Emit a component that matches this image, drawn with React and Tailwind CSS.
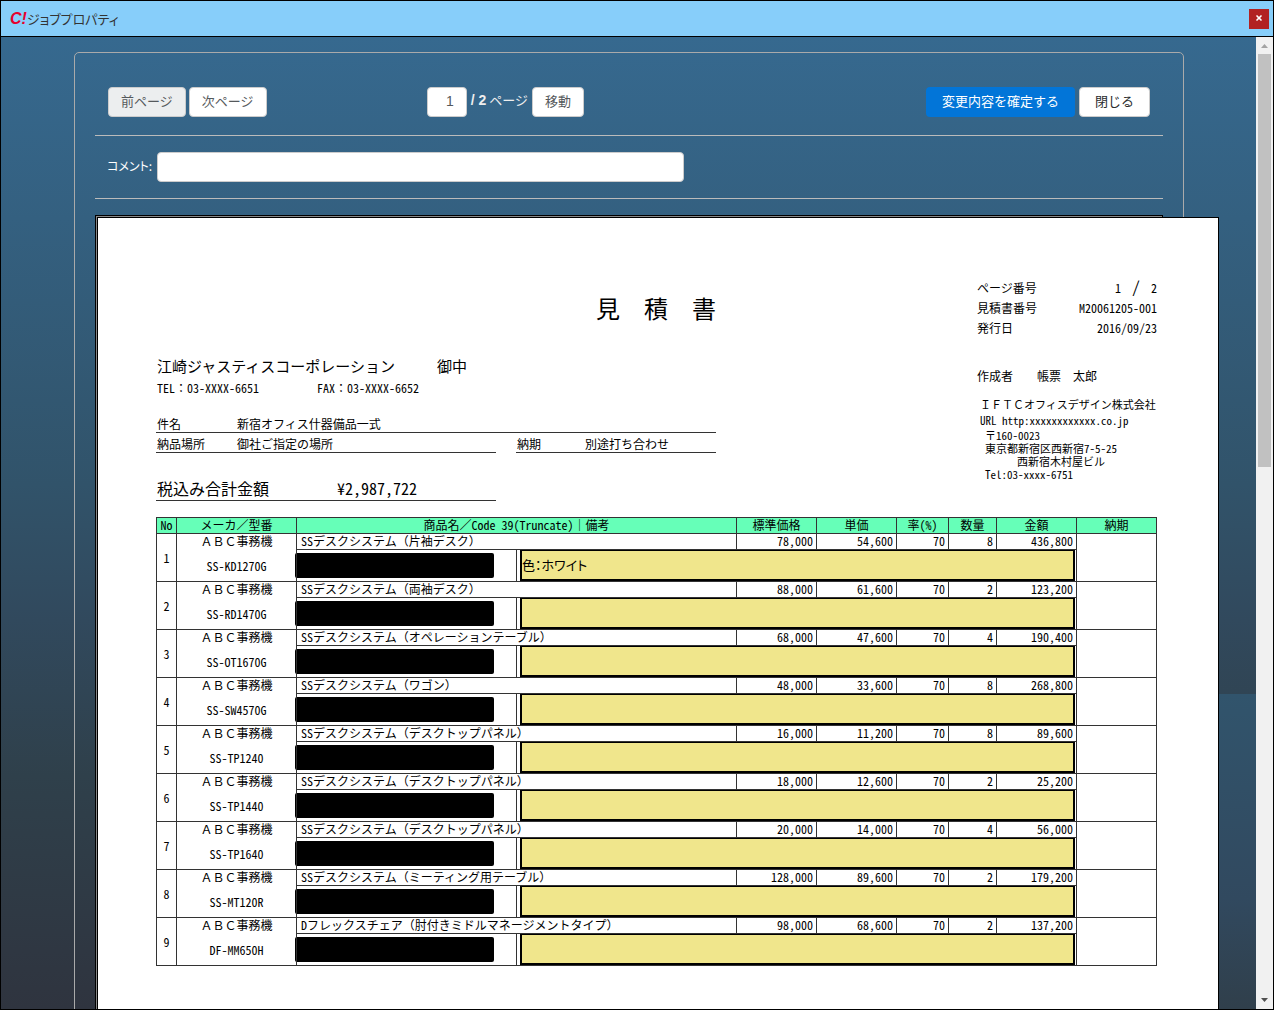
import { useState } from "react";
import { X } from "lucide-react";

const items = [
  { code: "SS-KD1270G", name: "SSデスクシステム（片袖デスク）", list: "78,000", unit: "54,600", rate: 70, qty: 8, total: "436,800", note: "色：ホワイト" },
  { code: "SS-RD1470G", name: "SSデスクシステム（両袖デスク）", list: "88,000", unit: "61,600", rate: 70, qty: 2, total: "123,200", note: "" },
  { code: "SS-OT1670G", name: "SSデスクシステム（オペレーションテーブル）", list: "68,000", unit: "47,600", rate: 70, qty: 4, total: "190,400", note: "" },
  { code: "SS-SW4570G", name: "SSデスクシステム（ワゴン）", list: "48,000", unit: "33,600", rate: 70, qty: 8, total: "268,800", note: "" },
  { code: "SS-TP1240", name: "SSデスクシステム（デスクトップパネル）", list: "16,000", unit: "11,200", rate: 70, qty: 8, total: "89,600", note: "" },
  { code: "SS-TP1440", name: "SSデスクシステム（デスクトップパネル）", list: "18,000", unit: "12,600", rate: 70, qty: 2, total: "25,200", note: "" },
  { code: "SS-TP1640", name: "SSデスクシステム（デスクトップパネル）", list: "20,000", unit: "14,000", rate: 70, qty: 4, total: "56,000", note: "" },
  { code: "SS-MT120R", name: "SSデスクシステム（ミーティング用テーブル）", list: "128,000", unit: "89,600", rate: 70, qty: 2, total: "179,200", note: "" },
  { code: "DF-MM650H", name: "Dフレックスチェア（肘付きミドルマネージメントタイプ）", list: "98,000", unit: "68,600", rate: 70, qty: 2, total: "137,200", note: "" },
];

const btn = "h-[30px] rounded border border-[#ccc] bg-white px-3 pb-1 text-[13px] leading-none whitespace-nowrap disabled:bg-[#eceeef]";
const cell = "border border-[#333] p-0";
const head = "border border-[#333] p-0 align-top font-normal";
const num = "border border-[#333] p-0 pr-[3px] text-right align-top";

// the sheet sets latin text half width, full width characters keep their own width
function Mixed({ children }) {
  return children.split(/([！-～　]+)/).map((part, i) =>
    i % 2 ? <span key={i} className="[font-feature-settings:normal]">{part}</span> : part
  );
}

function TitleBar() {
  return (
    <header className="flex h-9 shrink-0 items-center border-b border-black bg-[#87cefa] pr-1 pl-[9px]">
      <span className="font-['Liberation_Sans',sans-serif] text-[16px] leading-5 font-bold text-[#e6002d] italic">C!</span>
      <h1 className="text-[13px] leading-5 text-[#333] [font-feature-settings:'palt']">ジョブプロパティ</h1>
      <button aria-label="閉じる" className="ml-auto flex h-5 w-5 justify-center bg-[#b22222] pt-[5px] text-white">
        <X size={8} strokeWidth={5} />
      </button>
    </header>
  );
}

function Toolbar() {
  const [page, setPage] = useState("1");
  return (
    <div className="flex items-center border-b border-[#bbb] px-px pb-[18px] text-[#55595c]">
      <div className="flex w-[30%] gap-[3px] pl-3">
        <button disabled className={btn}>前ページ</button>
        <button className={btn}>次ページ</button>
      </div>
      <div className="flex items-center gap-1 pl-[11px]">
        <input aria-label="ページ" value={page} onChange={(e) => setPage(e.target.value)} className="h-[30px] w-10 rounded border border-[#ccc] bg-white pr-3 pb-[2px] text-right font-['Liberation_Sans',sans-serif] text-[14px]" />
        <span className="pb-1 text-[13px] leading-5 whitespace-nowrap text-[#eee]">
          <b className="font-['Liberation_Sans',sans-serif] text-[14px]">/ 2</b> ページ
        </span>
        <button className={btn}>移動</button>
      </div>
      <div className="ml-auto flex gap-1 pr-3">
        <button className="h-[30px] rounded bg-[#0275d8] px-4 pb-1 text-[13px] leading-none whitespace-nowrap text-white">変更内容を確定する</button>
        <button className="h-[30px] rounded border border-[#ccc] bg-white px-[15px] pb-1 text-[13px] leading-none whitespace-nowrap text-[#292b2c]">閉じる</button>
      </div>
    </div>
  );
}

function Comment() {
  const [comment, setComment] = useState("");
  return (
    <div className="flex items-center gap-1 border-b border-[#bbb] px-3 py-4">
      <label htmlFor="comment" className="w-[46px] pb-[2px] text-[12px] leading-5 whitespace-nowrap text-white [font-feature-settings:'palt']">コメント:</label>
      <input id="comment" value={comment} onChange={(e) => setComment(e.target.value)} className="h-[30px] w-[527px] rounded border border-[#ccc] bg-white px-3 text-[13px]" />
    </div>
  );
}

function Summary() {
  return (
    <div className="flex justify-between text-[12px]">
      <div className="w-[560px] pt-[78px]">
        <h2 className="text-right text-[24px] leading-6"><Mixed>見　積　書</Mixed></h2>
        <p className="mt-9 flex gap-[42px] pl-px text-[15px] leading-5">
          <span>江崎ジャスティスコーポレーション</span>
          <span>御中</span>
        </p>
        <p className="mt-[2px] flex pl-px leading-5">
          <span className="w-40"><Mixed>TEL：03-XXXX-6651</Mixed></span>
          <span><Mixed>FAX：03-XXXX-6652</Mixed></span>
        </p>
        <div className="mt-[15px] flex h-5 items-end border-b border-[#333] pl-px leading-4">
          <span className="w-20">件名</span>
          <span>新宿オフィス什器備品一式</span>
        </div>
        <div className="flex gap-5 leading-4">
          <div className="flex h-5 w-[340px] items-end border-b border-[#333] pl-px">
            <span className="w-20">納品場所</span>
            <span>御社ご指定の場所</span>
          </div>
          <div className="flex h-5 grow items-end border-b border-[#333] pl-px">
            <span className="w-[68px]">納期</span>
            <span>別途打ち合わせ</span>
          </div>
        </div>
        <div className="mt-[27px] flex w-[340px] border-b border-[#333] pb-1 pl-px text-[16px] leading-4">
          <span className="w-[180px]">税込み合計金額</span>
          <span>¥2,987,722</span>
        </div>
      </div>
      <div className="w-[180px] pt-[60px]">
        <dl className="grid grid-cols-2 leading-5">
          <dt>ページ番号</dt>
          <dd className="flex items-start justify-end gap-[11px]">
            <span>1</span>
            <span className="text-[16px] leading-4">/</span>
            <span>2</span>
          </dd>
          <dt>見積書番号</dt>
          <dd className="text-right">M20061205-001</dd>
          <dt>発行日</dt>
          <dd className="text-right">2016/09/23</dd>
        </dl>
        <p className="mt-7 leading-5"><Mixed>作成者　　帳票　太郎</Mixed></p>
        <p className="mt-[10px] pl-[3px] text-[11px] leading-4 whitespace-nowrap"><Mixed>ＩＦＴＣオフィスデザイン株式会社</Mixed></p>
        <p className="pl-[3px] text-[11px] leading-4">URL http:xxxxxxxxxxxx.co.jp</p>
        <div className="pt-px pl-2 text-[11px] leading-[13px] whitespace-nowrap">
          <p>〒160-0023</p>
          <p>東京都新宿区西新宿7-5-25</p>
          <p className="pl-8">西新宿木村屋ビル</p>
          <p>Tel:03-xxxx-6751</p>
        </div>
      </div>
    </div>
  );
}

function Items() {
  return (
    <table className="mt-4 w-[1001px] table-fixed border-collapse text-[12px] leading-[13px]">
      <colgroup>
        <col className="w-5" />
        <col className="w-[120px]" />
        <col className="w-[220px]" />
        <col className="w-[220px]" />
        <col className="w-20" />
        <col className="w-20" />
        <col className="w-[52px]" />
        <col className="w-12" />
        <col className="w-20" />
        <col className="w-20" />
      </colgroup>
      <thead>
        <tr className="h-4 bg-[#66ffb8]">
          <th className={head}>No</th>
          <th className={head}><Mixed>メーカ／型番</Mixed></th>
          <th colSpan={2} className={head}><Mixed>商品名／Code 39(Truncate)｜備考</Mixed></th>
          <th className={head}>標準価格</th>
          <th className={head}>単価</th>
          <th className={head}>率(%)</th>
          <th className={head}>数量</th>
          <th className={head}>金額</th>
          <th className={head}>納期</th>
        </tr>
      </thead>
      {items.map((item, i) => (
        <tbody key={item.code}>
          <tr className="h-4">
            <td rowSpan={2} className={`${cell} text-center`}>{i + 1}</td>
            <td rowSpan={2} className={`${cell} text-center align-top`}>
              <Mixed>ＡＢＣ事務機</Mixed>
              <p className="pt-3">{item.code}</p>
            </td>
            <td colSpan={2} className={`${cell} pl-1 align-top whitespace-nowrap`}><Mixed>{item.name}</Mixed></td>
            <td className={num}>{item.list}</td>
            <td className={num}>{item.unit}</td>
            <td className={num}>{item.rate}</td>
            <td className={num}>{item.qty}</td>
            <td className={num}>{item.total}</td>
            <td rowSpan={2} className={cell}></td>
          </tr>
          <tr className="h-8">
            <td className={`${cell} align-top`}>
              <div className="mt-[3px] -ml-[2px] h-[25px] w-[199px] rounded-[2px] bg-black"></div>
            </td>
            <td colSpan={6} className={`${cell} align-top`}>
              <input aria-label={`備考 ${i + 1}`} defaultValue={item.note} className="-mt-px -mb-px ml-[3px] block h-8 w-[555px] border-2 border-black bg-[#f0e68c] pb-[2px] text-[13px] text-black [font-feature-settings:'palt']" />
            </td>
          </tr>
        </tbody>
      ))}
    </table>
  );
}

function ScrollBar() {
  return (
    <div className="flex w-[17px] shrink-0 flex-col items-center bg-[#f1f1f1]">
      <svg viewBox="0 0 17 17" className="h-[17px] w-[17px]"><path d="M5 11h7L8.500 7z" fill="#a3a3a3" /></svg>
      <div className="h-[413px] w-[13px] bg-[#c1c1c1]"></div>
      <svg viewBox="0 0 17 17" className="mt-auto h-[17px] w-[17px]"><path d="M5 6h7L8.500 10z" fill="#505050" /></svg>
    </div>
  );
}

export default function App() {
  return (
    <div className="flex h-screen flex-col overflow-hidden border border-black font-['Noto_Sans_CJK_JP',sans-serif]">
      <TitleBar />
      <div className="flex min-h-0 grow">
        <main className="min-w-0 grow overflow-hidden pt-[15px] pr-[72px] pl-[73px] [background:linear-gradient(#31546c,#31495f_65%,#303f4b)_right_bottom/60px_315px_no-repeat,linear-gradient(#36698f,#31536a_46%,#31495d_60%,#2f404b_76%,#2f343f)]">
          <div className="rounded-[5px] border border-[#aaa] px-5 pt-[34px] pb-5">
            <Toolbar />
            <Comment />
            <div className="mt-4 border border-black">
              <div className="border border-[#888]">
                <div className="w-[1122px] border border-black bg-white pr-[61px] pb-20 pl-[58px] text-black [font-feature-settings:'hwid']">
                  <Summary />
                  <Items />
                </div>
              </div>
            </div>
          </div>
        </main>
        <ScrollBar />
      </div>
    </div>
  );
}
